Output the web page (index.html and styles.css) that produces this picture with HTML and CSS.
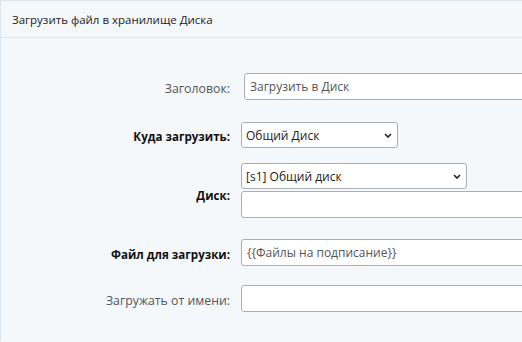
FILE: index.html
```html
<!DOCTYPE html>
<html lang="ru">
<head>
<meta charset="utf-8">
<title>Загрузить файл в хранилище Диска</title>
<link rel="stylesheet" href="styles.css">
</head>
<body>
<div class="panel">
  <div class="panel-header">Загрузить файл в хранилище Диска</div>
  <div class="panel-body">
    <div class="form-row form-row--first">
      <label class="field-label">Заголовок:</label>
      <div class="field-control"><input class="text-input text-input--shifted" type="text" value="Загрузить в Диск"></div>
    </div>
    <div class="form-row form-row--where">
      <label class="field-label field-label--bold">Куда загрузить:</label>
      <div class="field-control">
        <div class="select-wrap select-wrap--short">
          <select class="select-input"><option>Общий Диск</option></select>
          <svg class="chevron" width="8" height="5" viewBox="0 0 8 5"><path d="M1 1 L4 4 L7 1" fill="none" stroke="#222" stroke-width="1.6"/></svg>
        </div>
      </div>
    </div>
    <div class="form-row form-row--disk">
      <label class="field-label field-label--bold field-label--low">Диск:</label>
      <div class="field-control field-control--stack">
        <div class="select-wrap select-wrap--mid">
          <select class="select-input"><option>[s1] Общий диск</option></select>
          <svg class="chevron" width="8" height="5" viewBox="0 0 8 5"><path d="M1 1 L4 4 L7 1" fill="none" stroke="#222" stroke-width="1.6"/></svg>
        </div>
        <input class="text-input" type="text" value="">
      </div>
    </div>
    <div class="form-row form-row--file">
      <label class="field-label field-label--bold">Файл для загрузки:</label>
      <div class="field-control"><input class="text-input" type="text" value="{{Файлы на подписание}}"></div>
    </div>
    <div class="form-row form-row--user">
      <label class="field-label">Загружать от имени:</label>
      <div class="field-control"><input class="text-input" type="text" value=""></div>
    </div>
  </div>
</div>
</body>
</html>
```

FILE: styles.css
```css
html, body {
  margin: 0;
  padding: 0;
}
body {
  background: #f5f8fa;
  font-family: "Open Sans", "Noto Sans", sans-serif;
  color: #333;
  overflow: hidden;
}
.panel {
  border-top: 1px solid #dbe5ed;
  border-left: 1px solid #dbe5ed;
  min-height: 340px;
  background: #f5f8fa;
  overflow: hidden;
}
.panel-header {
  height: 37px;
  box-sizing: border-box;
  padding: 11px 0 0 11px;
  font-size: 11.5px;
  line-height: 16px;
  color: #222;
  border-bottom: 1px solid #dbe5ed;
}
.panel-body {
  padding-top: 35px;
  overflow: hidden;
}
.form-row {
  display: grid;
  grid-template-columns: 229px 1fr;
  column-gap: 11px;
  align-items: center;
}
.form-row--where { margin-top: 22px; }
.form-row--disk { margin-top: 15px; }
.form-row--file { margin-top: 21px; }
.form-row--user { margin-top: 19px; }

.field-label {
  text-align: right;
  font-size: 12.3px;
  line-height: 16px;
  color: #555;
  padding-top: 4px;
  white-space: nowrap;
}
.field-label--bold {
  font-size: 11.6px;
  font-weight: bold;
  color: #111;
}
.field-label--low {
  padding-top: 10px;
}
.field-control {
  display: flex;
  min-width: 0;
  overflow: hidden;
}
.field-control--stack {
  flex-direction: column;
  align-items: flex-start;
  gap: 2px;
}
.text-input {
  flex: 0 0 auto;
  width: 320px;
  height: 27px;
  box-sizing: border-box;
  border: 1px solid #a9afb5;
  border-radius: 3px;
  background: #fff;
  padding: 0 5px;
  font-family: "Open Sans", "Noto Sans", sans-serif;
  font-size: 12px;
  color: #555;
  outline: none;
}
.text-input--shifted {
  margin-left: 3px;
}
.select-wrap {
  position: relative;
  flex: 0 0 auto;
  height: 26px;
}
.select-wrap--short { width: 157px; }
.select-wrap--mid { width: 226px; }
.select-input {
  appearance: none;
  -webkit-appearance: none;
  width: 100%;
  height: 26px;
  box-sizing: border-box;
  border: 1px solid #a9afb5;
  border-radius: 3px;
  background: #fff;
  padding: 0 20px 0 4px;
  font-family: "Open Sans", "Noto Sans", sans-serif;
  font-size: 12px;
  color: #222;
  outline: none;
}
.chevron {
  position: absolute;
  right: 6px;
  top: 11px;
  pointer-events: none;
}
```
